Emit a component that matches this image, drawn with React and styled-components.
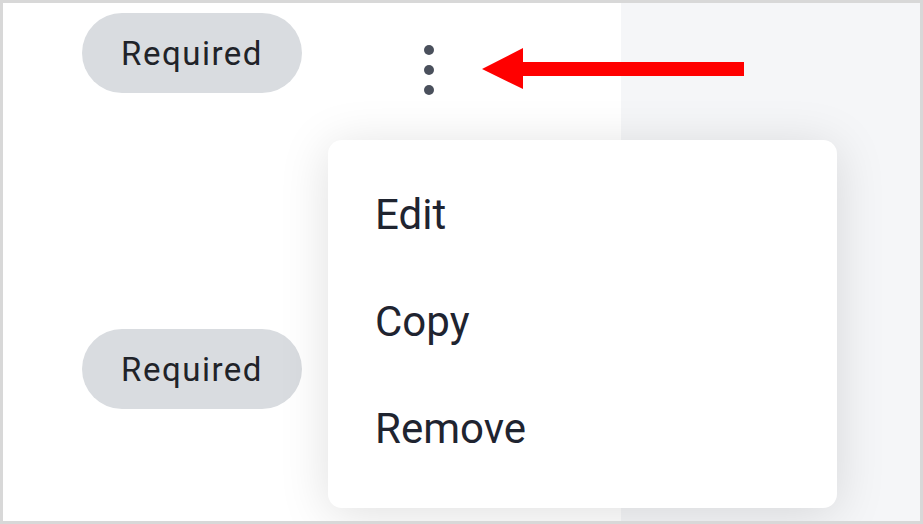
import React from 'react';
import styled, { createGlobalStyle } from 'styled-components';

const GlobalStyle = createGlobalStyle`
    html, body {
        margin: 0;
        padding: 0;
        background: #ffffff;
    }
    body {
        font-family: Roboto, "Liberation Sans", Arial, sans-serif;
    }
`;

const Frame = styled.div`
    box-sizing: border-box;
    width: 923px;
    height: 524px;
    border: 3px solid #d8d8d8;
    display: grid;
    grid-template-columns: 618px 1fr;
    overflow: hidden;
`;

const Main = styled.div`
    background: #ffffff;
    display: flex;
    flex-direction: column;
    padding: 10px 0 0 79px;
    position: relative;
    z-index: 1;
`;

const SidePanel = styled.div`
    background: #f5f6f8;
`;

const Row = styled.div`
    display: flex;
    align-items: flex-start;
    gap: 107px;
    min-height: 316px;
`;

const Pill = styled.span`
    box-sizing: border-box;
    width: 220px;
    height: 80px;
    border-radius: 40px;
    background: #d9dce0;
    color: #1f2329;
    font-size: 33px;
    letter-spacing: 1.5px;
    display: flex;
    align-items: center;
    justify-content: center;
`;

const KebabWrap = styled.div`
    position: relative;
    margin-top: 27px;
`;

const Kebab = styled.button`
    width: 40px;
    height: 60px;
    border: none;
    background: none;
    padding: 0;
    display: flex;
    flex-direction: column;
    align-items: center;
    justify-content: center;
    gap: 10px;
    cursor: pointer;
`;

const Dot = styled.span`
    width: 10px;
    height: 10px;
    border-radius: 50%;
    background: #4a505c;
`;

const Arrow = styled.svg`
    position: absolute;
    left: 73px;
    top: 8px;
`;

const Menu = styled.ul`
    position: absolute;
    left: -81px;
    top: 100px;
    width: 509px;
    height: 368px;
    box-sizing: border-box;
    margin: 0;
    padding: 21px 0 26px;
    list-style: none;
    background: #ffffff;
    border-radius: 14px;
    box-shadow: 0 6px 50px rgba(0, 0, 0, 0.13);
`;

const MenuItem = styled.li`
    height: 107px;
    display: flex;
    align-items: center;
    padding-left: 47px;
    font-size: 42px;
    color: #1f2430;
`;

const items = ['Edit', 'Copy', 'Remove'];

const App = () => {
    return (
        <>
            <GlobalStyle />
            <Frame>
                <Main>
                    <Row>
                        <Pill>Required</Pill>
                        <KebabWrap>
                            <Kebab aria-label="More options">
                                <Dot />
                                <Dot />
                                <Dot />
                            </Kebab>
                            <Arrow width="262" height="41" viewBox="0 0 262 41">
                                <polygon points="0,21 41,0 41,14 262,14 262,28 41,28 41,41" fill="#ff0000" />
                            </Arrow>
                            <Menu>
                                {items.map((label) => (
                                    <MenuItem key={label}>{label}</MenuItem>
                                ))}
                            </Menu>
                        </KebabWrap>
                    </Row>
                    <Row>
                        <Pill>Required</Pill>
                    </Row>
                </Main>
                <SidePanel />
            </Frame>
        </>
    );
};

export default App;
